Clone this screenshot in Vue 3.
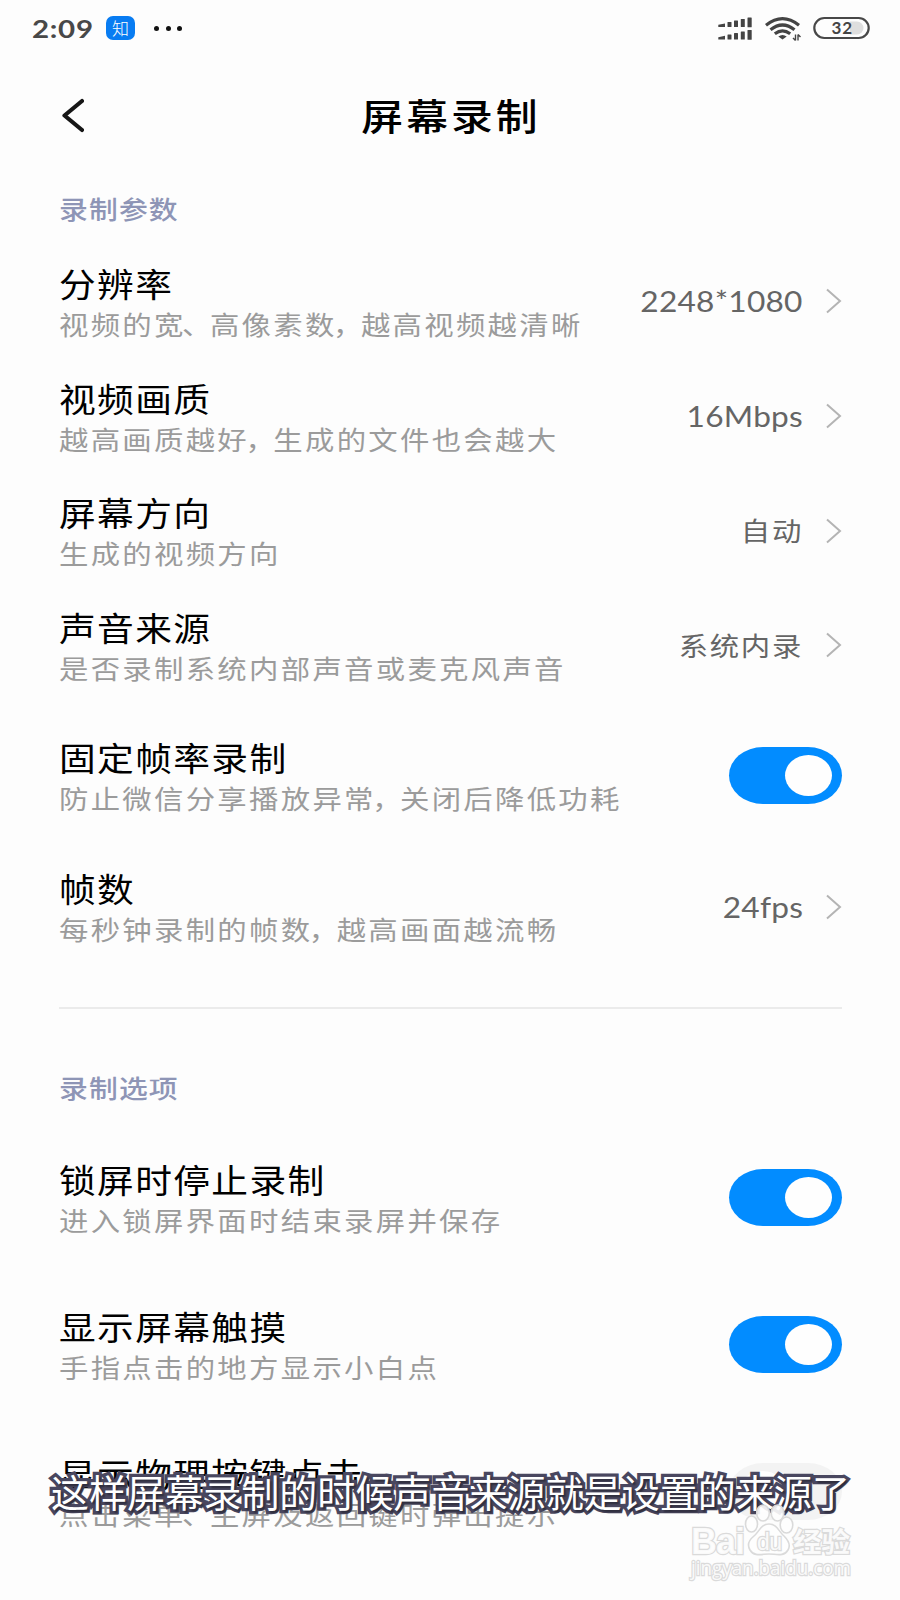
<script setup>
import { ref, reactive } from 'vue';

const caption = ref('这样屏幕录制的时候声音来源就是设置的来源了');

const params = reactive([
  {
    title: '分辨率',
    desc: '视频的宽、高像素数，越高视频越清晰',
    value: '2248*1080',
  },
  {
    title: '视频画质',
    desc: '越高画质越好，生成的文件也会越大',
    value: '16Mbps',
  },
  { title: '屏幕方向', desc: '生成的视频方向', value: '自动' },
  {
    title: '声音来源',
    desc: '是否录制系统内部声音或麦克风声音',
    value: '系统内录',
  },
  {
    title: '固定帧率录制',
    desc: '防止微信分享播放异常，关闭后降低功耗',
    on: true,
  },
  {
    title: '帧数',
    desc: '每秒钟录制的帧数，越高画面越流畅',
    value: '24fps',
    last: true,
  },
]);

const options = reactive([
  { title: '锁屏时停止录制', desc: '进入锁屏界面时结束录屏并保存', on: true },
  { title: '显示屏幕触摸', desc: '手指点击的地方显示小白点', on: true },
  {
    title: '显示物理按键点击',
    desc: '点击菜单、主屏及返回键时弹出提示',
    on: false,
  },
]);

const isToggle = (item) => item.on !== undefined;

const toggle = (item) => {
  if (isToggle(item)) {
    item.on = !item.on;
  }
};

// punctuation is set tighter than the other characters
const split = (text) => text.split(/([，、])/);
const isMark = (part) => part === '，' || part === '、';
const isLatin = (text) => /^[\x20-\x7e]+$/.test(text);
</script>

<template>
  <div class="screen">
    <div class="status">
      <span class="time">2:09</span>
      <span class="app-badge">知</span>
      <span class="dots"><i></i><i></i><i></i></span>
      <svg class="status-icons" width="156" height="30" viewBox="716 13 156 30">
        <g fill="#444">
          <path d="M718.3 24.8l6.7-1.4v3.6h-6.7z" />
          <rect x="727.5" y="22" width="4" height="5" rx="0.5" />
          <rect x="734" y="20.5" width="4" height="6.5" rx="0.5" />
          <rect x="740.8" y="19" width="4" height="8" rx="0.5" />
          <rect x="747.5" y="17.5" width="4.2" height="9.8" rx="0.5" />
          <path d="M718.3 37.2l6.7-1.4v3.8h-6.7z" />
          <rect x="727.5" y="34.5" width="4" height="5" rx="0.5" />
          <rect x="734" y="33" width="4" height="6.5" rx="0.5" />
          <rect x="740.8" y="31.5" width="4" height="8" rx="0.5" />
          <rect x="747.5" y="30" width="4.2" height="9.8" rx="0.5" />
          <path d="M778.3 36.4q4.2-3 8.4 0l-4.2 3.2z" />
        </g>
        <g fill="none" stroke="#444" stroke-width="3.2">
          <path d="M766 25.2q16.5-13.2 33 0" />
          <path d="M770.5 29.8q12-9.6 24 0" />
          <path d="M774.8 33.8q7.7-5.8 15.4 0" />
        </g>
        <path
          d="M795.5 34.5v6M793 38l2.5 2.5M798 40.5v-6M800.5 37l-2.5-2.5"
          fill="none"
          stroke="#444"
          stroke-width="1.4"
        />
        <path d="M850 21.5h7a6.5 6.5 0 0 1 0 13h-7z" fill="#dedede" />
        <rect
          x="814.3"
          y="18"
          width="54.4"
          height="20"
          rx="10"
          fill="none"
          stroke="#484848"
          stroke-width="2.2"
        />
        <text x="831.5" y="34.3" textLength="20.5" class="battery-text">32</text>
      </svg>
    </div>

    <header class="header">
      <svg class="back" width="24" height="36" viewBox="0 0 24 36">
        <path
          d="M22 3L4.5 17.5L22 32"
          fill="none"
          stroke="#161616"
          stroke-width="4.2"
          stroke-linecap="round"
          stroke-linejoin="round"
        />
      </svg>
      <h1>屏幕录制</h1>
    </header>

    <section>
      <h2 class="label">录制参数</h2>
      <div
        v-for="item in params"
        :key="item.title"
        class="row"
        :class="{ 'is-toggle': isToggle(item), 'is-last': item.last }"
        @click="toggle(item)"
      >
        <div class="text">
          <div class="title">{{ item.title }}</div>
          <div class="desc"><span
              v-for="(part, i) in split(item.desc)"
              :key="i"
              :class="{ mark: isMark(part) }"
            >{{ part }}</span></div>
        </div>
        <span
          v-if="isToggle(item)"
          class="switch"
          :class="{ 'is-on': item.on }"
        ></span>
        <template v-else>
          <span class="value" :class="{ latin: isLatin(item.value) }">{{
            item.value
          }}</span>
          <svg class="chevron" width="16" height="26" viewBox="0 0 16 26">
            <path
              d="M1 1.5L14 13L1 24.5"
              fill="none"
              stroke="#b4b4b4"
              stroke-width="2"
            />
          </svg>
        </template>
      </div>
    </section>

    <div class="divider"></div>

    <section>
      <h2 class="label second">录制选项</h2>
      <div
        v-for="item in options"
        :key="item.title"
        class="row is-option"
        @click="toggle(item)"
      >
        <div class="text">
          <div class="title">{{ item.title }}</div>
          <div class="desc"><span
              v-for="(part, i) in split(item.desc)"
              :key="i"
              :class="{ mark: isMark(part) }"
            >{{ part }}</span></div>
        </div>
        <span class="switch" :class="{ 'is-on': item.on }"></span>
      </div>
    </section>

    <div class="caption">{{ caption }}</div>

    <svg class="watermark" width="180" height="90" viewBox="680 1500 180 90">
      <g class="outline">
        <ellipse cx="751.5" cy="1524" rx="6" ry="8" />
        <ellipse cx="763" cy="1513" rx="6.3" ry="8" />
        <ellipse cx="777.5" cy="1513" rx="6.3" ry="8" />
        <ellipse cx="786.5" cy="1525" rx="6.3" ry="8" />
        <path
          d="M769 1524c-8 0-10 8-15 12c-5 4-7 9-4 14c4 7 12 4 19 4s15 3 19-4c3-5 0-10-4-14c-5-4-7-12-15-12z"
        />
        <text x="691" y="1554" textLength="54" class="brand">Bai</text>
        <text x="757" y="1550" textLength="25" class="du">du</text>
        <text
          x="793"
          y="1552"
          textLength="57"
          lengthAdjust="spacingAndGlyphs"
          class="cjk"
        >经验</text>
        <text
          x="691"
          y="1575"
          textLength="160"
          lengthAdjust="spacingAndGlyphs"
          class="url"
        >jingyan.baidu.com</text>
      </g>
    </svg>
  </div>
</template>

<style>
body {
  background: #fdfdfd;
}
</style>

<style scoped>
.screen {
  position: relative;
  width: 900px;
  height: 1600px;
  overflow: hidden;
  background: #fdfdfd;
  color: #000;
  font-family: 'Noto Sans CJK SC', sans-serif;
}

/* status bar */
.status {
  display: flex;
  align-items: center;
  height: 56px;
  padding: 0 28px 0 32px;
}
.time {
  width: 74px;
  font-family: Lato, sans-serif;
  font-size: 25px;
  font-weight: 700;
  letter-spacing: 0.6px;
  color: #484848;
  white-space: nowrap;
  transform: scaleX(1.18);
  transform-origin: left;
}
.app-badge {
  width: 29px;
  height: 24px;
  border-radius: 7px;
  background: #087cf2;
  color: #fff;
  font-size: 17px;
  font-weight: 300;
  line-height: 24px;
  text-align: center;
}
.dots {
  display: flex;
  gap: 6.5px;
  margin-left: 19px;
}
.dots i {
  width: 5px;
  height: 5px;
  border-radius: 50%;
  background: #111;
}
.status-icons {
  margin-left: auto;
}
.battery-text {
  font: 700 17px Lato, sans-serif;
  fill: #444;
}

/* page header */
.header {
  display: grid;
  grid-template-columns: 40px 1fr 40px;
  align-items: center;
  height: 120px;
  padding: 0 60px;
}
h1 {
  margin: -3px 0 0 2px;
  font-size: 37px;
  line-height: 44px;
  font-weight: 500;
  letter-spacing: 2.7px;
  text-align: center;
  transform: scaleX(1.13);
}

.label {
  height: 68px;
  margin: 0 0 0 59px;
  font-size: 25.5px;
  line-height: 63px;
  font-weight: 500;
  letter-spacing: 1px;
  color: #8e95b6;
  transform: scaleX(1.13);
  transform-origin: left;
}
.label.second {
  height: 115px;
  line-height: 156px;
}

/* setting rows */
.row {
  display: flex;
  align-items: center;
  height: 114.7px;
  padding: 0 58px 0 59px;
}
.row.is-toggle {
  height: 146px;
}
.row.is-last {
  height: 116px;
}
.row.is-option {
  height: 147px;
}
.text {
  flex: 1;
  padding-top: 3px;
  white-space: nowrap;
  transform: scaleX(1.13);
  transform-origin: left;
}
.title {
  font-size: 32.5px;
  line-height: 42px;
  letter-spacing: 1.2px;
}
.desc {
  font-size: 26px;
  line-height: 40px;
  letter-spacing: 2.03px;
  color: #9b9b9b;
}
.mark {
  margin-left: -3.2px;
  margin-right: -3.4px;
}
.value {
  margin-right: 23px;
  font-size: 26px;
  letter-spacing: 1.5px;
  color: #656565;
  transform: translateY(-1px) scaleX(1.13);
  transform-origin: right;
}
.value.latin {
  font-family: Lato, sans-serif;
  font-size: 28px;
  letter-spacing: 0.2px;
  transform: scaleX(1.13);
}

.switch {
  display: flex;
  align-items: center;
  width: 113px;
  height: 57px;
  border-radius: 34px / 28.5px;
  background: #f3f3f3;
}
.switch::after {
  content: '';
  width: 47px;
  height: 41px;
  margin-left: 10px;
  border-radius: 50%;
  background: #fefefe;
}
.switch.is-on {
  background: #028cff;
}
.switch.is-on::after {
  margin-left: 56px;
}

.divider {
  height: 2px;
  margin: 42.2px 58px 0 59px;
  background: #ebebeb;
}

/* caption lies over the last row */
.caption {
  position: absolute;
  top: 1463px;
  left: 51px;
  font-size: 38px;
  line-height: 56px;
  letter-spacing: 0.05px;
  color: #fff;
  white-space: nowrap;
  paint-order: stroke fill;
  -webkit-text-stroke: 6.5px #49475f;
  text-shadow: 2px 2px 2px rgba(0, 0, 0, 0.4);
}

.watermark {
  position: absolute;
  top: 1500px;
  left: 680px;
}
.outline {
  fill: #fefefe;
  fill-opacity: 0.9;
  stroke: #dadada;
  stroke-width: 1.6;
}
.outline text {
  paint-order: stroke fill;
  stroke-width: 2.4;
}
.brand {
  font: 700 36px 'Liberation Sans', sans-serif;
}
.du {
  font: 400 23px 'Liberation Sans', sans-serif;
}
.cjk {
  font: 700 27px 'Noto Sans CJK SC', sans-serif;
}
.url {
  font: 400 19.5px 'Open Sans', sans-serif;
}
</style>
